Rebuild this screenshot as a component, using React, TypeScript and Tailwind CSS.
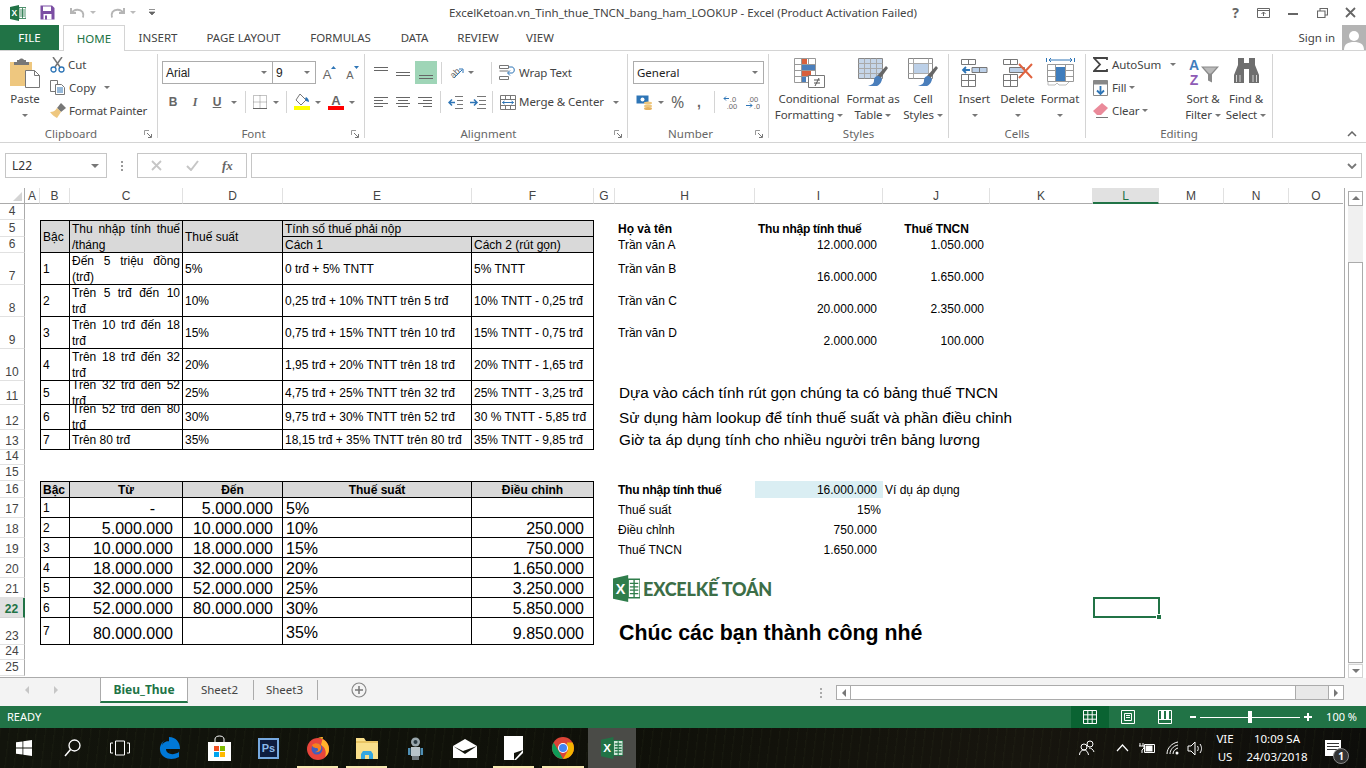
import type { ReactNode } from 'react'

const ui = "font-['Noto_Sans','Open_Sans',sans-serif]"

function Caret({ className = '' }: { className?: string }) {
  return <span className={`inline-block w-0 h-0 border-x-[3px] border-x-transparent border-t-[3px] border-t-[#777] ${className}`} />
}

function Launcher() {
  return (
    <svg width="9" height="9" viewBox="0 0 9 9" className="absolute right-[4px] top-[3px]">
      <path d="M0.5 5V.5H5" fill="none" stroke="#999" />
      <path d="M3 3l4 4M4 7.500h3.500V4" fill="none" stroke="#777" />
    </svg>
  )
}

function Sep({ className = '' }: { className?: string }) {
  return <span className={`inline-block w-px h-[22px] bg-[#d4d4d4] ${className}`} />
}

function Group({ width, label, launcher, children }: { width: string; label: string; launcher?: boolean; children: ReactNode }) {
  return (
    <div className={`${width} h-[84px] border-r border-[#d4d4d4] flex flex-col shrink-0`}>
      <div className="h-[73px] flex flex-col shrink-0">{children}</div>
      <div className={`relative h-[14px] shrink-0 text-[11.5px] leading-[14px] text-[#666] text-center ${launcher ? 'pr-[15px]' : ''}`}>
        {label}
        {launcher && <Launcher />}
      </div>
    </div>
  )
}

function Lines({ rows, stroke = '#666' }: { rows: number[][]; stroke?: string }) {
  return (
    <svg width="15" height="14" viewBox="0 0 15 14">
      {rows.map(([x1, x2, y]) => (
        <path key={`${x1}${x2}${y}`} d={`M${x1} ${y}.5H${x2}`} stroke={stroke} />
      ))}
    </svg>
  )
}

function BigButton({ width, icon, lines, caretInline }: { width: string; icon: ReactNode; lines: string[]; caretInline?: boolean }) {
  return (
    <div className={`${width} flex flex-col items-center text-[11.5px] tracking-[-0.1px] leading-[16px] text-[#444] shrink-0`}>
      <div className="h-[33px] flex items-start justify-center">{icon}</div>
      <div className="whitespace-nowrap">{lines[0]}</div>
      {caretInline ? (
        <div className="whitespace-nowrap flex items-center gap-[3px]">
          {lines[1]}
          <Caret />
        </div>
      ) : (
        <div className="h-[16px] flex items-center"><Caret /></div>
      )}
    </div>
  )
}

function ExcelMark({ size = 16, dark = '#217346', light = 'white' }: { size?: number; dark?: string; light?: string }) {
  return (
    <svg width={size} height={size} viewBox="0 0 16 16">
      <path d="M0 2l9-2v16L0 14z" fill={dark} />
      <path d="M9 2.500h7v11H9z" fill={light} stroke={dark} strokeWidth=".8" />
      <path d="M10 5h5M10 7h5M10 9h5M10 11h5M12.500 3v10" stroke={dark} strokeWidth=".8" />
      <text x="4.400" y="11" fontSize="8.500" fontWeight="700" textAnchor="middle" fill="white" fontFamily="Liberation Sans">X</text>
    </svg>
  )
}

function TitleBar() {
  return (
    <div className="h-[25px] flex items-center relative shrink-0">
      <div className="ml-[10px]"><ExcelMark size={16} /></div>
      <svg width="15" height="15" viewBox="0 0 15 15" className="ml-[14px]">
        <path d="M.5.500h11.500l2.500 2.500v11.500H.5z" fill="#7b4ea3" />
        <path d="M3 1.500h8v4.500H3z" fill="white" />
        <path d="M3.500 9h8v5.500h-8z" fill="white" />
        <path d="M5 10.500h2v4H5z" fill="#7b4ea3" />
      </svg>
      <svg width="15" height="12" viewBox="0 0 15 12" className="ml-[15px]">
        <path d="M1 1v5h5M1.500 6C4 2 10 1.500 12.500 5c1 1.500 1 3.500.5 5.500" fill="none" stroke="#b5b5b5" strokeWidth="2" />
      </svg>
      <Caret className="ml-[5px] border-t-[#bbb]" />
      <svg width="15" height="12" viewBox="0 0 15 12" className="ml-[14px]">
        <path d="M14 1v5H9M13.500 6C11 2 5 1.500 2.500 5c-1 1.500-1 3.500-.5 5.500" fill="none" stroke="#b5b5b5" strokeWidth="2" />
      </svg>
      <Caret className="ml-[5px] border-t-[#bbb]" />
      <svg width="6" height="7" viewBox="0 0 6 7" className="ml-[13px]">
        <path d="M0 .5h6M0 3h6l-3 3z" fill="#666" stroke="#666" strokeWidth=".7" />
      </svg>
      <div className="absolute left-[449px] top-[4px] text-[11.5px] tracking-[-0.03px] leading-[18px] text-[#444] whitespace-nowrap">
        ExcelKetoan.vn_Tinh_thue_TNCN_bang_ham_LOOKUP - Excel (Product Activation Failed)
      </div>
      <div className="ml-auto flex items-center mr-[10px]">
        <span className="text-[14px] font-bold text-[#666] mr-[18px] leading-none">?</span>
        <svg width="13" height="10" viewBox="0 0 13 10" className="mr-[18px]">
          <path d="M.5.500h12v9H.5zM.5 2.500h12M6.500 8V4M4.500 6l2-2 2 2" fill="none" stroke="#666" />
        </svg>
        <span className="w-[10px] h-[2px] bg-[#666] mr-[19px] mt-[3px]" />
        <svg width="11" height="10" viewBox="0 0 11 10" className="mr-[17px]">
          <path d="M.5 3h7.500v6.500H.5zM3 3V.5h7.500V7H8" fill="none" stroke="#666" strokeWidth="1.100" />
        </svg>
        <svg width="11" height="11" viewBox="0 0 11 11">
          <path d="M1 1l9 9M10 1l-9 9" stroke="#666" strokeWidth="1.800" />
        </svg>
      </div>
    </div>
  )
}

function Tabs() {
  const tabs = [
    { label: 'INSERT', cls: 'ml-[15px] w-[36px]' },
    { label: 'PAGE LAYOUT', cls: 'ml-[30px] w-[75px]' },
    { label: 'FORMULAS', cls: 'ml-[29px] w-[61px]' },
    { label: 'DATA', cls: 'ml-[29px] w-[29px]' },
    { label: 'REVIEW', cls: 'ml-[29px] w-[40px]' },
    { label: 'VIEW', cls: 'ml-[29px] w-[26px]' },
  ]
  return (
    <div className="h-[26px] flex items-end border-b border-[#d4d4d4] shrink-0 text-[11.5px]">
      <div className="w-[59px] h-[25px] bg-[#217346] text-white flex items-center justify-center">FILE</div>
      <div className="ml-[4px] w-[62px] h-[26px] bg-white border-x border-t border-[#d4d4d4] text-[#217346] flex items-center justify-center -mb-px">HOME</div>
      {tabs.map(t => (
        <div key={t.label} className={`${t.cls} h-[25px] flex items-center justify-center text-[#444] whitespace-nowrap`}>{t.label}</div>
      ))}
      <div className="ml-auto h-[25px] flex items-center text-[#444]">Sign in</div>
      <div className="ml-[7px] w-[24px] h-[25px] bg-[#b4b4b4] overflow-hidden flex items-end justify-center">
        <svg width="22" height="22" viewBox="0 0 22 22">
          <circle cx="11" cy="8" r="5" fill="white" />
          <path d="M1 22c0-6 4-8 10-8s10 2 10 8z" fill="white" />
        </svg>
      </div>
    </div>
  )
}

function Ribbon() {
  const conditional = (
    <svg width="31" height="30" viewBox="0 0 31 30">
      <path d="M.5.500h21v24H.5zM7.500.500v24M14.500.500v24M.5 6.500h21M.5 12.500h21M.5 18.500h21" fill="none" stroke="#999" />
      <path d="M8 1h5v5H8z" fill="#d9603b" />
      <path d="M8 7h13v5H8z" fill="#4a7ebb" />
      <path d="M8 13h9v5H8z" fill="#d9603b" />
      <path d="M8 19h4v5H8z" fill="#4a7ebb" />
      <path d="M14.500 17.500h16v12h-16z" fill="white" stroke="#777" />
      <path d="M20 22h6M20 25h6M25 20l-4 8" stroke="#555" />
    </svg>
  )
  const formatTable = (
    <svg width="30" height="30" viewBox="0 0 30 30">
      <path d="M.5.500h24v20H.5z" fill="#c5d5e8" stroke="#888" />
      <path d="M.5 5.500h24M.5 10.500h24M.5 15.500h24M6.500.500v20M12.500.500v20M18.500.500v20" stroke="#a9a9a9" />
      <path d="M28 8l-9 10 3 3 8-11z" fill="#666" />
      <path d="M21 18c-4 0-5 2-5 5 0 2-2 4-6 5h9c3-1 5-5 5-7z" fill="#4a7ebb" />
    </svg>
  )
  const cellStyles = (
    <svg width="30" height="30" viewBox="0 0 30 30">
      <path d="M.5.500h24v20H.5z" fill="white" stroke="#888" />
      <path d="M5 5h15v10H5z" fill="#bcd0e8" />
      <path d="M.5 5.500h24M.5 15.500h24M5.500.500v20M20.500.500v20" stroke="#a9a9a9" fill="none" />
      <path d="M28 8l-9 10 3 3 8-11z" fill="#666" />
      <path d="M21 18c-4 0-5 2-5 5 0 2-2 4-6 5h9c3-1 5-5 5-7z" fill="#4a7ebb" />
    </svg>
  )
  const insert = (
    <svg width="27" height="30" viewBox="0 0 27 30">
      <path d="M.5 1.500h14v5H.5zM7.500 1.500v5M.5 16.500h14v12H.5zM7.500 16.500v12M.5 22.500h14" fill="none" stroke="#777" />
      <path d="M11 9.500h15v5H11zM18.500 9.500v5" fill="#bcd0e8" stroke="#777" />
      <path d="M9 12H2M5 9l-3 3 3 3" fill="none" stroke="#2e75b6" strokeWidth="1.800" />
    </svg>
  )
  const del = (
    <svg width="30" height="30" viewBox="0 0 30 30">
      <path d="M.5 1.500h14v5H.5zM7.500 1.500v5M.5 16.500h14v12H.5zM7.500 16.500v12M.5 22.500h14" fill="none" stroke="#777" />
      <path d="M6.500 9.500h15v5h-15z" fill="#bcd0e8" stroke="#777" />
      <path d="M16 6l13 14M29 6L16 20" stroke="#e0633f" strokeWidth="2" />
    </svg>
  )
  const format = (
    <svg width="29" height="30" viewBox="0 0 29 30">
      <path d="M.5 0v4M28.500 0v4M3 2h23M5 0L3 2l2 2M24 0l2 2-2 2" fill="none" stroke="#2e75b6" />
      <path d="M1.500 6.500h26v17h-26zM1.500 12.500h26M1.500 18.500h26M9.500 6.500v17M19.500 6.500v17" fill="none" stroke="#999" />
      <path d="M10 9h9v14h-9z" fill="#3f7dbd" />
      <path d="M2 24v3h7l2-2 2 2h7l3-3" fill="none" stroke="#bbb" />
    </svg>
  )
  const sort = (
    <svg width="31" height="30" viewBox="0 0 31 30">
      <text x="6" y="12" fontSize="14" fontWeight="700" textAnchor="middle" fill="#3f7dbd" fontFamily="Liberation Sans">A</text>
      <text x="6" y="27" fontSize="14" fontWeight="700" textAnchor="middle" fill="#8e5bb5" fontFamily="Liberation Sans">Z</text>
      <path d="M13 8.500h18l-7 8v8l-4-2v-6z" fill="#8a8a8a" />
      <path d="M15.500 9.500h13l-5.500 6H21z" fill="#b9b9b9" />
    </svg>
  )
  const find = (
    <svg width="27" height="26" viewBox="0 0 27 26">
      <path d="M5 0h6v5h5V0h6v7l4 10v8H16V11h-5v14H1v-8l4-10z" fill="#6e6e6e" />
      <path d="M3.500 17v7M7 17v7M20 17v7M23.500 17v7" stroke="white" strokeWidth=".7" />
    </svg>
  )
  return (
    <div className="h-[92px] border-b border-[#d4d4d4] flex pt-[3px] shrink-0 relative">
      <Group width="w-[158px]" label="Clipboard" launcher>
        <div className="flex text-[11.5px] text-[#444]">
          <div className="w-[50px] flex flex-col items-center">
            <svg width="30" height="30" viewBox="0 0 30 30" className="mt-[4px]">
              <path d="M0 4h22v24H0z" fill="#eec77f" />
              <path d="M7 2h2c1-2 4-2 5 0h2v2h3v3H4V4h3z" fill="#777" />
              <path d="M15.500 12.500h9l5 5v12h-14z" fill="white" stroke="#777" />
              <path d="M24.500 12.500v5h5" fill="none" stroke="#777" />
            </svg>
            <div className="leading-[16px] mt-[3px]">Paste</div>
            <div className="h-[16px] flex items-center"><Caret /></div>
          </div>
          <div className="flex flex-col -mt-[1px]">
            <div className="h-[23px] flex items-center">
              <svg width="15" height="16" viewBox="0 0 15 16">
                <path d="M3 0l7 10M12 0L5 10" stroke="#777" strokeWidth="1.500" />
                <circle cx="3.500" cy="12.500" r="2.500" fill="none" stroke="#2e75b6" strokeWidth="1.300" />
                <circle cx="11.500" cy="12.500" r="2.500" fill="none" stroke="#2e75b6" strokeWidth="1.300" />
              </svg>
              <span className="ml-[3px]">Cut</span>
            </div>
            <div className="h-[23px] flex items-center">
              <svg width="15" height="15" viewBox="0 0 15 15">
                <path d="M.5.500h7l0 11h-7z" fill="white" stroke="#777" />
                <path d="M5.500 4.500h6l3 3v7h-9z" fill="white" stroke="#777" />
                <path d="M7 8h6M7 10h6M7 12h6" stroke="#2e75b6" />
              </svg>
              <span className="ml-[4px]">Copy</span>
              <Caret className="ml-[8px]" />
            </div>
            <div className="h-[23px] flex items-center">
              <svg width="16" height="15" viewBox="0 0 16 15">
                <path d="M11 0l5 5-5 4-4-4z" fill="#777" />
                <path d="M7 5l4 4-4 6c-2-1-5-3-7-6 3 0 5-1 7-4z" fill="#eec77f" />
              </svg>
              <span className="ml-[3px] tracking-[-0.2px] whitespace-nowrap">Format Painter</span>
            </div>
          </div>
        </div>
      </Group>

      <Group width="w-[207px]" label="Font" launcher>
        <div className="flex items-center mt-[7px] ml-[4px] h-[23px]">
          <div className="w-[111px] h-[23px] border border-[#acacac] flex items-center justify-between pl-[3px] pr-[5px] text-[12px] text-[#222] font-['Liberation_Sans',sans-serif]">Arial<Caret /></div>
          <div className="w-[43px] h-[23px] border border-l-0 border-[#acacac] flex items-center justify-between pl-[3px] pr-[5px] text-[12px] text-[#222] font-['Liberation_Sans',sans-serif]">9<Caret /></div>
          <svg width="14" height="14" viewBox="0 0 14 14" className="ml-[6px]">
            <text x="5" y="13" fontSize="13" textAnchor="middle" fill="#666" fontFamily="Liberation Sans">A</text>
            <path d="M9 3l2.500-3L14 3z" fill="#2e75b6" />
          </svg>
          <svg width="14" height="14" viewBox="0 0 14 14" className="ml-[9px]">
            <text x="5" y="13" fontSize="11" textAnchor="middle" fill="#666" fontFamily="Liberation Sans">A</text>
            <path d="M9 0l2.500 3L14 0z" fill="#2e75b6" />
          </svg>
        </div>
        <div className="flex items-center ml-[4px] mt-[7px] h-[22px] text-[#666]">
          <span className="w-[22px] text-center font-bold text-[12px] font-['Liberation_Sans',sans-serif]">B</span>
          <span className="w-[22px] text-center italic text-[12px] font-['Liberation_Serif',serif] font-bold">I</span>
          <span className="w-[22px] text-center underline font-bold text-[12px] font-['Liberation_Sans',sans-serif]">U</span>
          <Caret className="ml-[3px]" />
          <Sep className="ml-[8px]" />
          <svg width="14" height="14" viewBox="0 0 14 14" className="ml-[7px]">
            <path d="M.5.500h13v13H.5zM7 .5v13M.5 7h13" fill="none" stroke="#888" strokeDasharray="1 1" />
            <path d="M0 13.500h14" stroke="#666" />
          </svg>
          <Caret className="ml-[6px]" />
          <Sep className="ml-[7px]" />
          <svg width="16" height="16" viewBox="0 0 16 16" className="ml-[7px]">
            <path d="M6 0l6 6-5 5-5-5z" fill="white" stroke="#777" />
            <path d="M12 3c2 1 3 3 3 5l-3-1-1-2z" fill="#2e75b6" />
            <path d="M0 12h16v4H0z" fill="#ffff00" />
          </svg>
          <Caret className="ml-[5px]" />
          <svg width="16" height="16" viewBox="0 0 16 16" className="ml-[7px]">
            <text x="8" y="11" fontSize="13" fontWeight="700" textAnchor="middle" fill="#666" fontFamily="Liberation Sans">A</text>
            <path d="M0 12h16v4H0z" fill="#ff0000" />
          </svg>
          <Caret className="ml-[5px]" />
        </div>
      </Group>

      <Group width="w-[263px]" label="Alignment" launcher>
        <div className="flex items-center mt-[7px] h-[23px]">
          <div className="ml-[9px] w-[15px] h-[14px]"><Lines rows={[[0, 14, 1], [0, 14, 4]]} /></div>
          <div className="ml-[7px] w-[15px] h-[14px]"><Lines rows={[[0, 14, 6], [0, 14, 9]]} /></div>
          <div className="ml-[4px] w-[22px] h-[23px] bg-[#9fd5b7] flex items-center justify-center"><Lines rows={[[0, 14, 9], [0, 14, 12]]} /></div>
          <Sep className="ml-[4px]" />
          <svg width="15" height="15" viewBox="0 0 15 15" className="ml-[7px]">
            <text x="6" y="11" fontSize="9" textAnchor="middle" transform="rotate(-45 6 8)" fill="#666" fontFamily="Liberation Sans">ab</text>
            <path d="M5 13l8-8M10 4l4 0 0 4" fill="none" stroke="#2e75b6" />
          </svg>
          <Caret className="ml-[4px]" />
          <Sep className="ml-[17px]" />
          <svg width="16" height="15" viewBox="0 0 16 15" className="ml-[7px]">
            <path d="M.5.500h9v3h-9zM.5 11.500h9v3h-9zM.5 6h9" fill="none" stroke="#777" />
            <path d="M10 2h3c3 0 3 6 0 6H9M11 5.500L8.500 8l2.500 2.500" fill="none" stroke="#2e75b6" />
          </svg>
          <span className="ml-[4px] text-[11.5px] tracking-[-0.1px] text-[#444]">Wrap Text</span>
        </div>
        <div className="flex items-center mt-[7px] h-[22px]">
          <div className="ml-[9px] w-[15px] h-[14px]"><Lines rows={[[0, 14, 2], [0, 9, 5], [0, 14, 8], [0, 9, 11]]} /></div>
          <div className="ml-[7px] w-[15px] h-[14px]"><Lines rows={[[0, 14, 2], [2, 12, 5], [0, 14, 8], [2, 12, 11]]} /></div>
          <div className="ml-[7px] w-[15px] h-[14px]"><Lines rows={[[0, 14, 2], [5, 14, 5], [0, 14, 8], [5, 14, 11]]} /></div>
          <Sep className="ml-[7px]" />
          <svg width="15" height="13" viewBox="0 0 15 13" className="ml-[7px]">
            <path d="M7 .5h8M9 4.500h6M9 8.500h6M7 12.500h8" stroke="#777" />
            <path d="M7 6.500H1M4 3.500l-3 3 3 3" fill="none" stroke="#2e75b6" strokeWidth="1.500" />
          </svg>
          <svg width="16" height="13" viewBox="0 0 16 13" className="ml-[7px]">
            <path d="M7 .5h9M9 4.500h7M9 8.500h7M7 12.500h9" stroke="#777" />
            <path d="M0 6.500h7M4 3.500l3 3-3 3" fill="none" stroke="#2e75b6" strokeWidth="1.500" />
          </svg>
          <Sep className="ml-[6px]" />
          <svg width="16" height="15" viewBox="0 0 16 15" className="ml-[7px]">
            <path d="M.5.500h15v14H.5zM.5 4.500h15M.5 10.500h15M5.500.5v4M10.500.5v4M5.500 10.500v4M10.500 10.500v4" fill="none" stroke="#777" />
            <path d="M2.500 7.500h11M4.500 6l-2 1.500 2 1.500M11.500 6l2 1.500-2 1.500" fill="none" stroke="#2e75b6" />
          </svg>
          <span className="ml-[3px] text-[11.5px] tracking-[-0.05px] text-[#444]">Merge &amp; Center</span>
          <Caret className="ml-[9px]" />
        </div>
      </Group>

      <Group width="w-[141px]" label="Number" launcher>
        <div className="ml-[5px] mt-[7px] w-[131px] h-[23px] border border-[#acacac] flex items-center justify-between pl-[3px] pr-[5px] text-[11.5px] text-[#222]">General<Caret /></div>
        <div className="flex items-center mt-[7px] h-[22px]">
          <svg width="18" height="16" viewBox="0 0 18 16" className="ml-[8px]">
            <path d="M.5 1.500h12v8H.5z" fill="#2e75b6" />
            <circle cx="6.500" cy="5.500" r="2" fill="white" />
            <ellipse cx="12" cy="9" rx="4" ry="1.500" fill="#eec77f" />
            <ellipse cx="12" cy="12" rx="4" ry="1.500" fill="#eec77f" />
            <ellipse cx="12" cy="14.500" rx="4" ry="1.500" fill="#e6b25f" />
          </svg>
          <Caret className="ml-[4px]" />
          <span className="ml-[7px] w-[14px] text-[16px] leading-none text-[#666]">%</span>
          <span className="ml-[12px] w-[4px] text-[14px] leading-none font-bold text-[#666] font-['Liberation_Sans',sans-serif]">,</span>
          <Sep className="ml-[13px]" />
          <svg width="15" height="15" viewBox="0 0 15 15" className="ml-[8px]">
            <text x="10" y="7" fontSize="7.500" textAnchor="middle" fill="#666" fontFamily="Liberation Sans">.0</text>
            <text x="9" y="14" fontSize="7.500" textAnchor="middle" fill="#666" fontFamily="Liberation Sans">.00</text>
            <path d="M6 3.500H1M3 1.500l-2 2 2 2" fill="none" stroke="#2e75b6" />
          </svg>
          <svg width="15" height="15" viewBox="0 0 15 15" className="ml-[7px]">
            <text x="8" y="7" fontSize="7.500" textAnchor="middle" fill="#666" fontFamily="Liberation Sans">.00</text>
            <text x="12" y="14" fontSize="7.500" textAnchor="middle" fill="#666" fontFamily="Liberation Sans">.0</text>
            <path d="M1 10.500h6M5 8.500l2 2-2 2" fill="none" stroke="#2e75b6" />
          </svg>
        </div>
      </Group>

      <Group width="w-[180px]" label="Styles">
        <div className="flex pt-[4px] pl-[5px]">
          <BigButton width="w-[70px]" icon={conditional} lines={['Conditional', 'Formatting']} caretInline />
          <BigButton width="w-[58px]" icon={formatTable} lines={['Format as', 'Table']} caretInline />
          <BigButton width="w-[42px]" icon={cellStyles} lines={['Cell', 'Styles']} caretInline />
        </div>
      </Group>

      <Group width="w-[137px]" label="Cells">
        <div className="flex pt-[4px] pl-[4px]">
          <BigButton width="w-[43px]" icon={insert} lines={['Insert']} />
          <BigButton width="w-[43px]" icon={del} lines={['Delete']} />
          <BigButton width="w-[42px]" icon={format} lines={['Format']} />
        </div>
      </Group>

      <Group width="w-[187px]" label="Editing">
        <div className="flex text-[11.5px] tracking-[-0.1px] text-[#444]">
          <div className="flex flex-col pl-[7px] w-[96px] -mt-[1px]">
            <div className="h-[23px] flex items-center">
              <svg width="15" height="15" viewBox="0 0 15 15">
                <path d="M14 3V1H1l6 6.500L1 14h13v-2" fill="none" stroke="#444" strokeWidth="1.800" />
              </svg>
              <span className="ml-[4px]">AutoSum</span>
              <Caret className="ml-[9px]" />
            </div>
            <div className="h-[23px] flex items-center">
              <svg width="15" height="16" viewBox="0 0 15 16">
                <path d="M.5.500h14v15H.5z" fill="white" stroke="#888" />
                <path d="M.5.500h14v4H.5z" fill="#888" />
                <path d="M7.500 6v8M4 10.500l3.500 3.500 3.500-3.500" fill="none" stroke="#2e75b6" strokeWidth="1.800" />
              </svg>
              <span className="ml-[4px]">Fill</span>
              <Caret className="ml-[3px]" />
            </div>
            <div className="h-[23px] flex items-center">
              <svg width="15" height="15" viewBox="0 0 15 15">
                <path d="M9 0l6 5-7 7H4L0 8z" fill="#ea8a9a" />
                <path d="M3 14.500h12" stroke="#777" />
              </svg>
              <span className="ml-[4px]">Clear</span>
              <Caret className="ml-[3px]" />
            </div>
          </div>
          <div className="pt-[4px] flex">
            <BigButton width="w-[42px]" icon={sort} lines={['Sort &', 'Filter']} caretInline />
            <BigButton width="w-[44px]" icon={find} lines={['Find &', 'Select']} caretInline />
          </div>
        </div>
      </Group>

      <svg width="10" height="6" viewBox="0 0 10 6" className="absolute right-[9px] top-[80px]">
        <path d="M1 5l4-4 4 4" fill="none" stroke="#666" strokeWidth="1.500" />
      </svg>
    </div>
  )
}

function FormulaBar() {
  return (
    <div className="h-[25px] mt-[10px] flex shrink-0 text-[12px]">
      <div className="ml-[5px] w-[102px] border border-[#c6c6c6] flex items-center justify-between pl-[6px] pr-[7px] text-[#333]">
        L22
        <Caret className="border-x-[4px] border-t-[4px]" />
      </div>
      <div className="w-[30px] flex flex-col items-center justify-center gap-[2px]">
        <span className="w-[2px] h-[2px] bg-[#999]" />
        <span className="w-[2px] h-[2px] bg-[#999]" />
        <span className="w-[2px] h-[2px] bg-[#999]" />
      </div>
      <div className="w-[110px] border border-[#c6c6c6] flex items-center pl-[13px]">
        <svg width="11" height="11" viewBox="0 0 11 11">
          <path d="M1 1l9 9M10 1l-9 9" stroke="#c6c6c6" strokeWidth="1.800" />
        </svg>
        <svg width="13" height="11" viewBox="0 0 13 11" className="ml-[24px]">
          <path d="M1 6l4 4 7-9" fill="none" stroke="#c6c6c6" strokeWidth="2" />
        </svg>
        <span className="ml-[23px] italic font-bold text-[13px] text-[#666] font-['Liberation_Serif',serif]">fx</span>
      </div>
      <div className="ml-[4px] w-[1111px] border border-[#c6c6c6] flex items-center justify-end pr-[4px]">
        <svg width="10" height="6" viewBox="0 0 10 6">
          <path d="M1 1l4 4 4-4" fill="none" stroke="#777" strokeWidth="1.800" />
        </svg>
      </div>
    </div>
  )
}

const top = [
  { row: 'row-start-5', n: '1', c: 'Đến 5 triệu đồng (trđ)', d: '5%', e: '0 trđ + 5% TNTT', f: '5% TNTT' },
  { row: 'row-start-6', n: '2', c: 'Trên 5 trđ đến 10 trđ', d: '10%', e: '0,25 trđ + 10% TNTT trên 5 trđ', f: '10% TNTT - 0,25 trđ' },
  { row: 'row-start-7', n: '3', c: 'Trên 10 trđ đến 18 trđ', d: '15%', e: '0,75 trđ + 15% TNTT trên 10 trđ', f: '15% TNTT - 0,75 trđ' },
  { row: 'row-start-8', n: '4', c: 'Trên 18 trđ đến 32 trđ', d: '20%', e: '1,95 trđ + 20% TNTT trên 18 trđ', f: '20% TNTT - 1,65 trđ' },
  { row: 'row-start-9', n: '5', c: 'Trên 32 trđ đến 52 trđ', d: '25%', e: '4,75 trđ + 25% TNTT trên 32 trđ', f: '25% TNTT - 3,25 trđ' },
  { row: 'row-start-10', n: '6', c: 'Trên 52 trđ đến 80 trđ', d: '30%', e: '9,75 trđ + 30% TNTT trên 52 trđ', f: '30 % TNTT - 5,85 trđ' },
  { row: 'row-start-11', n: '7', c: 'Trên 80 trđ', d: '35%', e: '18,15 trđ + 35% TNTT trên 80 trđ', f: '35% TNTT - 9,85 trđ' },
]

const bottom = [
  { row: 'row-start-15', n: '1', c: '-', d: '5.000.000', e: '5%', f: '', numPad: 'pt-[2px]', pctPad: 'pt-[2px]', cPad: 'pr-[27px]' },
  { row: 'row-start-16', n: '2', c: '5.000.000', d: '10.000.000', e: '10%', f: '250.000', numPad: 'pt-[2px]', pctPad: 'pt-[2px]', cPad: 'pr-[9px]' },
  { row: 'row-start-17', n: '3', c: '10.000.000', d: '18.000.000', e: '15%', f: '750.000', numPad: 'pt-[2px]', pctPad: 'pt-[2px]', cPad: 'pr-[9px]' },
  { row: 'row-start-18', n: '4', c: '18.000.000', d: '32.000.000', e: '20%', f: '1.650.000', numPad: 'pt-[2px]', pctPad: 'pt-[2px]', cPad: 'pr-[9px]' },
  { row: 'row-start-19', n: '5', c: '32.000.000', d: '52.000.000', e: '25%', f: '3.250.000', numPad: 'pt-[2px]', pctPad: 'pt-[2px]', cPad: 'pr-[9px]' },
  { row: 'row-start-20', n: '6', c: '52.000.000', d: '80.000.000', e: '30%', f: '5.850.000', numPad: 'pt-[2px]', pctPad: 'pt-[2px]', cPad: 'pr-[9px]' },
  { row: 'row-start-21', n: '7', c: '80.000.000', d: '', e: '35%', f: '9.850.000', numPad: 'pt-[6px]', pctPad: 'pt-[3px]', cPad: 'pr-[9px]' },
]

const colHeaders = [
  { label: 'A', cls: 'col-start-2' },
  { label: 'B', cls: 'col-start-3' },
  { label: 'C', cls: 'col-start-4' },
  { label: 'D', cls: 'col-start-5' },
  { label: 'E', cls: 'col-start-6' },
  { label: 'F', cls: 'col-start-7' },
  { label: 'G', cls: 'col-start-8' },
  { label: 'H', cls: 'col-start-9' },
  { label: 'I', cls: 'col-start-10' },
  { label: 'J', cls: 'col-start-11' },
  { label: 'K', cls: 'col-start-12' },
  { label: 'L', cls: 'col-start-13' },
  { label: 'M', cls: 'col-start-14' },
  { label: 'N', cls: 'col-start-15' },
  { label: 'O', cls: 'col-start-16' },
]

const rowHeaders = [
  { label: '4', cls: 'row-start-2' },
  { label: '5', cls: 'row-start-3' },
  { label: '6', cls: 'row-start-4' },
  { label: '7', cls: 'row-start-5' },
  { label: '8', cls: 'row-start-6' },
  { label: '9', cls: 'row-start-7' },
  { label: '10', cls: 'row-start-8' },
  { label: '11', cls: 'row-start-9' },
  { label: '12', cls: 'row-start-10' },
  { label: '13', cls: 'row-start-11' },
  { label: '14', cls: 'row-start-12' },
  { label: '15', cls: 'row-start-13' },
  { label: '16', cls: 'row-start-14' },
  { label: '17', cls: 'row-start-15' },
  { label: '18', cls: 'row-start-16' },
  { label: '19', cls: 'row-start-17' },
  { label: '20', cls: 'row-start-18' },
  { label: '21', cls: 'row-start-19' },
  { label: '22', cls: 'row-start-20' },
  { label: '23', cls: 'row-start-21' },
  { label: '24', cls: 'row-start-22' },
  { label: '25', cls: 'row-start-23' },
]

const boxed = 'border-r border-b border-black flex items-center overflow-hidden px-[2px]'
const gray = 'bg-[#d9d9d9]'
const para = 'col-start-9 col-span-4 pl-[4px] text-[15.3px] flex items-center whitespace-nowrap'

function Sheet() {
  return (
    <div className="relative h-[490px] mt-[10px] shrink-0 font-['Liberation_Sans',sans-serif] text-[12px] leading-[16px] text-black">
      <div className="w-[1345px] h-[490px] border-r border-b border-[#ababab] grid grid-cols-[25px_15px_30px_113px_100px_189px_122px_21px_140px_128px_107px_103px_66px_65px_65px_54px] grid-rows-[16px_16px_17px_16px_32px_32px_32px_32px_24px_25px_20px_15px_16px_17px_20px_20px_20px_20px_20px_20px_27px_15px_16px]">
        <div className="col-start-1 row-start-1 border-b border-[#ababab] border-r flex items-end justify-end pr-[2px] pb-[2px]">
          <span className="w-0 h-0 border-l-[9px] border-l-transparent border-b-[9px] border-b-[#d4d4d4]" />
        </div>
        {colHeaders.map(h => (
          <div key={h.label} className={`${h.cls} row-start-1 border-b border-[#ababab] flex items-center justify-center pt-[1px] ${h.label === 'L' ? 'bg-[#e1e1e1] text-[#217346] border-b-2 border-b-[#217346]' : 'text-[#444]'} ${h.label === 'O' ? '' : 'border-r border-r-[#e1e1e1]'}`}>{h.label}</div>
        ))}
        {rowHeaders.map(h => (
          <div key={h.label} className={`${h.cls} col-start-1 border-r flex items-end justify-center overflow-hidden ${h.label === '22' ? 'bg-[#e1e1e1] font-bold text-[#217346] border-r-2 border-r-[#217346] border-b border-b-[#d4d4d4]' : 'text-[#444] border-r-[#ababab] border-b border-b-[#e1e1e1]'}`}>{h.label}</div>
        ))}

        <div className={`col-start-3 row-start-3 row-span-2 border-l border-t ${boxed} ${gray}`}>Bậc</div>
        <div className={`col-start-4 row-start-3 row-span-2 border-t ${boxed} ${gray}`}><div className="w-full text-justify">Thu nhập tính thuế /tháng</div></div>
        <div className={`col-start-5 row-start-3 row-span-2 border-t ${boxed} ${gray}`}>Thuế suất</div>
        <div className={`col-start-6 col-span-2 row-start-3 border-t ${boxed} ${gray}`}>Tính số thuế phải nộp</div>
        <div className={`col-start-6 row-start-4 ${boxed} ${gray}`}>Cách 1</div>
        <div className={`col-start-7 row-start-4 ${boxed} ${gray}`}>Cách 2 (rút gọn)</div>
        {top.map(r => (
          <div key={r.n} className="contents">
            <div className={`col-start-3 ${r.row} border-l ${boxed}`}>{r.n}</div>
            <div className={`col-start-4 ${r.row} ${boxed}`}><div className="w-full text-justify shrink-0">{r.c}</div></div>
            <div className={`col-start-5 ${r.row} ${boxed}`}>{r.d}</div>
            <div className={`col-start-6 ${r.row} ${boxed} whitespace-nowrap`}>{r.e}</div>
            <div className={`col-start-7 ${r.row} ${boxed} whitespace-nowrap`}>{r.f}</div>
          </div>
        ))}

        <div className={`col-start-3 row-start-14 border-l border-t font-bold ${boxed} ${gray}`}>Bậc</div>
        <div className={`col-start-4 row-start-14 border-t font-bold justify-center ${boxed} ${gray}`}>Từ</div>
        <div className={`col-start-5 row-start-14 border-t font-bold justify-center ${boxed} ${gray}`}>Đến</div>
        <div className={`col-start-6 row-start-14 border-t font-bold justify-center ${boxed} ${gray}`}>Thuế suất</div>
        <div className={`col-start-7 row-start-14 border-t font-bold justify-center ${boxed} ${gray}`}>Điều chỉnh</div>
        {bottom.map(r => (
          <div key={r.n} className="contents">
            <div className={`col-start-3 ${r.row} border-l ${boxed}`}>{r.n}</div>
            <div className={`col-start-4 ${r.row} ${boxed} justify-end text-[16px] ${r.cPad} ${r.numPad}`}>{r.c}</div>
            <div className={`col-start-5 ${r.row} ${boxed} justify-end pr-[9px] text-[16px] ${r.numPad}`}>{r.d}</div>
            <div className={`col-start-6 ${r.row} ${boxed} pl-[3px] text-[16px] ${r.pctPad}`}>{r.e}</div>
            <div className={`col-start-7 ${r.row} ${boxed} justify-end pr-[9px] text-[16px] ${r.numPad}`}>{r.f}</div>
          </div>
        ))}

        <div className="col-start-9 row-start-3 font-bold pl-[3px] flex items-center">Họ và tên</div>
        <div className="col-start-10 row-start-3 font-bold tracking-[-0.25px] pl-[3px] flex items-center whitespace-nowrap">Thu nhập tính thuế</div>
        <div className="col-start-11 row-start-3 font-bold tracking-[-0.1px] flex items-center justify-center">Thuế TNCN</div>
        <div className="col-start-9 row-start-4 pl-[3px] flex items-center">Trần văn A</div>
        <div className="col-start-10 row-start-4 pr-[6px] flex items-center justify-end">12.000.000</div>
        <div className="col-start-11 row-start-4 pr-[6px] flex items-center justify-end">1.050.000</div>
        <div className="col-start-9 row-start-5 pl-[3px] flex items-center">Trần văn B</div>
        <div className="col-start-10 row-start-5 pr-[6px] flex items-end justify-end">16.000.000</div>
        <div className="col-start-11 row-start-5 pr-[6px] flex items-end justify-end">1.650.000</div>
        <div className="col-start-9 row-start-6 pl-[3px] flex items-center">Trần văn C</div>
        <div className="col-start-10 row-start-6 pr-[6px] flex items-end justify-end">20.000.000</div>
        <div className="col-start-11 row-start-6 pr-[6px] flex items-end justify-end">2.350.000</div>
        <div className="col-start-9 row-start-7 pl-[3px] flex items-center">Trần văn D</div>
        <div className="col-start-10 row-start-7 pr-[6px] flex items-end justify-end">2.000.000</div>
        <div className="col-start-11 row-start-7 pr-[6px] flex items-end justify-end">100.000</div>

        <div className={`${para} row-start-9`}>Dựa vào cách tính rút gọn chúng ta có bảng thuế TNCN</div>
        <div className={`${para} row-start-10`}>Sử dụng hàm lookup để tính thuế suất và phần điều chỉnh</div>
        <div className={`${para} row-start-11`}>Giờ ta áp dụng tính cho nhiều người trên bảng lương</div>

        <div className="col-start-9 row-start-14 font-bold tracking-[-0.25px] pl-[3px] flex items-center">Thu nhập tính thuế</div>
        <div className="col-start-10 row-start-14 bg-[#daeef3] pr-[6px] flex items-center justify-end">16.000.000</div>
        <div className="col-start-11 row-start-14 pl-[2px] flex items-center">Ví dụ áp dụng</div>
        <div className="col-start-9 row-start-15 pl-[3px] flex items-end">Thuế suất</div>
        <div className="col-start-10 row-start-15 pr-[2px] flex items-end justify-end">15%</div>
        <div className="col-start-9 row-start-16 pl-[3px] flex items-end">Điều chỉnh</div>
        <div className="col-start-10 row-start-16 pr-[6px] flex items-end justify-end">750.000</div>
        <div className="col-start-9 row-start-17 pl-[3px] flex items-end">Thuế TNCN</div>
        <div className="col-start-10 row-start-17 pr-[6px] flex items-end justify-end">1.650.000</div>

        <div className="col-start-9 col-span-2 row-start-19 row-span-2 -ml-[2px] flex items-start whitespace-nowrap">
          <div className="flex items-center gap-[3px] mt-[-3px]">
            <ExcelMark size={27} dark="#2f7d4b" />
            <span className="font-['Lato',sans-serif] font-black text-[18px] tracking-[-0.2px] leading-[26px] text-[#3c6e47]">EXCELKẾ TOÁN</span>
          </div>
        </div>
        <div className="col-start-9 col-span-4 row-start-21 pl-[4px] font-bold text-[21.33px] leading-[24px] flex items-end whitespace-nowrap">Chúc các bạn thành công nhé</div>

        <div className="col-start-13 row-start-20 relative border-2 border-[#217346] -mr-px -mt-px">
          <span className="absolute -right-[4px] -bottom-[4px] w-[6px] h-[6px] bg-[#217346] border border-white" />
        </div>
      </div>

      <div className="absolute left-[1348px] top-[3px] w-[15px] h-[487px] bg-[#f0f0f0] flex flex-col">
        <div className="h-[15px] border border-[#ababab] bg-white flex items-center justify-center">
          <span className="w-0 h-0 border-x-[4px] border-x-transparent border-b-[4px] border-b-[#777]" />
        </div>
        <div className="mt-[56px] h-[402px] border border-[#ababab] bg-white" />
        <div className="mt-[1px] h-[14px] border border-[#d4d4d4] bg-white flex items-center justify-center">
          <span className="w-0 h-0 border-x-[4px] border-x-transparent border-t-[4px] border-t-[#777]" />
        </div>
      </div>
    </div>
  )
}

function SheetTabs() {
  return (
    <div className="h-[28px] bg-[#f3f3f3] flex shrink-0 text-[11.5px] text-[#444] relative">
      <div className="flex items-center h-[24px]">
        <span className="ml-[25px] w-0 h-0 border-y-[4px] border-y-transparent border-r-[4px] border-r-[#c6c6c6]" />
        <span className="ml-[25px] w-0 h-0 border-y-[4px] border-y-transparent border-l-[4px] border-l-[#c6c6c6]" />
      </div>
      <div className="ml-[42px] w-[88px] h-[25px] bg-white border-x border-[#ababab] border-b-2 border-b-[#217346] flex items-center justify-center font-bold text-[12px] text-[#217346]">Bieu_Thue</div>
      <div className="w-[65px] h-[24px] pr-[2px] flex items-center justify-center">Sheet2</div>
      <span className="w-px h-[20px] mt-[2px] bg-[#ababab]" />
      <div className="w-[63px] h-[24px] pr-[2px] flex items-center justify-center">Sheet3</div>
      <span className="w-px h-[20px] mt-[2px] bg-[#ababab]" />
      <div className="ml-[33px] h-[24px] flex items-center">
        <svg width="16" height="16" viewBox="0 0 16 16">
          <circle cx="8" cy="8" r="7" fill="none" stroke="#888" strokeWidth="1.200" />
          <path d="M8 4v8M4 8h8" stroke="#777" strokeWidth="1.500" />
        </svg>
      </div>
      <div className="ml-auto flex items-start h-[28px] pt-[7px] mr-[22px]">
        <div className="flex flex-col gap-[2px] mr-[14px] mt-[3px]">
          <span className="w-[2px] h-[2px] bg-[#aaa]" />
          <span className="w-[2px] h-[2px] bg-[#aaa]" />
          <span className="w-[2px] h-[2px] bg-[#aaa]" />
        </div>
        <div className="w-[508px] h-[15px] border border-[#ababab] flex bg-[#e8e8e8]">
          <div className="w-[14px] bg-white border-r border-[#ababab] flex items-center justify-center">
            <span className="w-0 h-0 border-y-[4px] border-y-transparent border-r-[4px] border-r-[#777]" />
          </div>
          <div className="w-[445px] bg-white border-r border-[#ababab]" />
          <div className="ml-auto w-[15px] bg-white border-l border-[#ababab] flex items-center justify-center">
            <span className="w-0 h-0 border-y-[4px] border-y-transparent border-l-[4px] border-l-[#777]" />
          </div>
        </div>
      </div>
    </div>
  )
}

function StatusBar() {
  return (
    <div className="h-[22px] bg-[#217346] text-white flex items-center shrink-0 text-[11px]">
      <span className="ml-[7px]">READY</span>
      <div className="ml-auto h-[22px] w-[38px] bg-[#0a6332] flex items-center justify-center">
        <svg width="14" height="14" viewBox="0 0 14 14">
          <path d="M.5.500h13v13H.5zM4.800.5v13M9.200.5v13M.5 4.800h13M.5 9.200h13" fill="none" stroke="white" />
        </svg>
      </div>
      <svg width="14" height="14" viewBox="0 0 14 14" className="ml-[12px]">
        <path d="M.5.500h13v13H.5zM3.500 3.500h7v7h-7zM5 5.500h4M5 7.500h4" fill="none" stroke="white" />
      </svg>
      <svg width="14" height="14" viewBox="0 0 14 14" className="ml-[23px]">
        <path d="M.5.500h13v13H.5zM.5 9.500h13" fill="none" stroke="white" />
        <path d="M3 1h3v8H3zM8 1h3v8H8z" fill="white" />
      </svg>
      <span className="ml-[18px] w-[6px] h-[2px] bg-white" />
      <div className="ml-[4px] w-[100px] h-px bg-white flex items-center justify-center">
        <span className="w-[4px] h-[12px] bg-white" />
      </div>
      <svg width="8" height="8" viewBox="0 0 8 8" className="ml-[4px]">
        <path d="M4 0v8M0 4h8" stroke="white" strokeWidth="2" />
      </svg>
      <span className="ml-[14px] mr-[9px] whitespace-nowrap">100 %</span>
    </div>
  )
}

function TaskItem({ children, width = 'w-[49px]', active, running }: { children: ReactNode; width?: string; active?: boolean; running?: boolean }) {
  return (
    <div className={`${width} h-[40px] relative flex items-center justify-center ${active ? 'bg-[#4a4b47]' : ''}`}>
      {children}
      {running && <span className="absolute left-[4px] right-[4px] bottom-0 h-[2px] bg-[#f5e8b0]" />}
    </div>
  )
}

function Taskbar() {
  return (
    <div className="h-[40px] bg-[repeating-linear-gradient(97deg,rgba(70,80,45,0.12)_0px,transparent_2px,transparent_9px),linear-gradient(90deg,#12140c,#0f1009_45%,#17150e_75%,#0d0d0a)] flex items-center shrink-0 text-white">
      <TaskItem width="w-[48px]">
        <svg width="16" height="16" viewBox="0 0 16 16">
          <path d="M0 2.300l6.500-.9v6.200H0zM7.300 1.300L16 0v7.600H7.300zM0 8.400h6.500v6.200L0 13.700zM7.300 8.400H16V16l-8.700-1.300z" fill="white" />
        </svg>
      </TaskItem>
      <TaskItem width="w-[48px]">
        <svg width="17" height="18" viewBox="0 0 17 18">
          <circle cx="10.500" cy="6.500" r="5.500" fill="none" stroke="white" strokeWidth="1.300" />
          <path d="M6.500 10.500L1 17" stroke="white" strokeWidth="1.500" />
        </svg>
      </TaskItem>
      <TaskItem width="w-[48px]">
        <svg width="20" height="16" viewBox="0 0 20 16">
          <path d="M5.500 1h9v14h-9z" fill="none" stroke="white" />
          <path d="M3 3H.5v10H3M17 3h2.500v10H17" fill="none" stroke="white" />
        </svg>
      </TaskItem>
      <TaskItem width="w-[51px]">
        <svg width="21" height="22" viewBox="0 0 21 22">
          <path d="M10 0c7 0 11 5 11 12H7c0 5 7 7 13 3v5c-7 4-18 2-19-7C.5 9 3 5 6 3 4 5 3.500 6 3 8c2-3 4-4 7-4 2 0 4 1 5 4H8c1-2 2-3 2-3z" fill="#0078d7" />
        </svg>
      </TaskItem>
      <TaskItem>
        <svg width="23" height="26" viewBox="0 0 23 26">
          <path d="M7 7V4c0-4 9-4 9 0v3" fill="none" stroke="white" />
          <path d="M0 7h23v19H0z" fill="white" />
          <path d="M6 11h5v5H6z" fill="#f25022" />
          <path d="M12 11h5v5h-5z" fill="#7fba00" />
          <path d="M6 17h5v5H6z" fill="#00a4ef" />
          <path d="M12 17h5v5h-5z" fill="#ffb900" />
        </svg>
      </TaskItem>
      <TaskItem>
        <div className="w-[21px] h-[21px] bg-[#0d1c3f] border-2 border-[#76a9e0] flex items-center justify-center text-[11px] font-bold text-[#8ab8ea] font-['Liberation_Sans',sans-serif] leading-none">Ps</div>
      </TaskItem>
      <TaskItem running>
        <svg width="22" height="24" viewBox="0 0 22 24">
          <circle cx="11" cy="13" r="11" fill="#e8453c" />
          <path d="M11 2c6 0 11 5 11 11 0 3-1 6-4 8 2-5 0-10-4-12L16 1c-2 0-3 0-5 1z" fill="#ffb32c" />
          <circle cx="10" cy="13" r="5.500" fill="#3f5fbf" />
          <path d="M5 9c3-3 8-2 9 1 1 4-2 7-6 6 3 0 4-3 2-4-2 0-4 0-5-3z" fill="#f77f1f" />
        </svg>
      </TaskItem>
      <TaskItem running>
        <svg width="22" height="21" viewBox="0 0 22 21">
          <path d="M0 0h8l2 3h12v18H0z" fill="#f9df8b" />
          <path d="M0 3h22v2H0z" fill="#e9c564" />
          <path d="M7 13h8l2 3v5H5v-5z" fill="#35a7e0" />
          <path d="M9 17h4v4H9z" fill="#f9df8b" />
        </svg>
      </TaskItem>
      <TaskItem>
        <svg width="15" height="23" viewBox="0 0 15 23">
          <circle cx="7.500" cy="5" r="4.500" fill="#9aa7ad" />
          <circle cx="7.500" cy="5" r="2" fill="#2b3a42" />
          <path d="M3 10h9v9H3z" fill="#b9c4c9" />
          <path d="M0 11h2.500v7H0zM12.500 11H15v7h-2.500z" fill="#4f8fb5" />
          <path d="M4 19h7v4H4z" fill="#70787c" />
        </svg>
      </TaskItem>
      <TaskItem>
        <svg width="24" height="19" viewBox="0 0 24 19">
          <path d="M0 7L12 0l12 7v12H0z" fill="white" />
          <path d="M0 7l10 5 14-5-12 8z" fill="#12140c" />
        </svg>
      </TaskItem>
      <TaskItem running>
        <svg width="19" height="24" viewBox="0 0 19 24">
          <path d="M0 0h19v17l-7 7H0z" fill="white" />
          <path d="M19 14l-9 10v-7z" fill="#12140c" />
        </svg>
      </TaskItem>
      <TaskItem running width="w-[50px]">
        <svg width="22" height="22" viewBox="0 0 22 22">
          <circle cx="11" cy="11" r="11" fill="#db4437" />
          <path d="M20.500 5.500A11 11 0 0 1 11 22l5-8.500-1-8z" fill="#f4b400" />
          <path d="M11 22A11 11 0 0 1 1.500 5.500L7 14.500z" fill="#0f9d58" />
          <circle cx="11" cy="11" r="5" fill="white" />
          <circle cx="11" cy="11" r="4" fill="#4285f4" />
        </svg>
      </TaskItem>
      <TaskItem width="w-[48px]" active>
        <ExcelMark size={22} dark="#217346" light="#cfe6d8" />
      </TaskItem>

      <div className="ml-auto flex items-center text-[11.5px]">
        <svg width="16" height="16" viewBox="0 0 16 16">
          <circle cx="11" cy="4" r="3" fill="none" stroke="white" />
          <circle cx="5" cy="7" r="3" fill="none" stroke="white" />
          <path d="M.5 15c0-3 2-5 4.500-5s4 2 4.500 5M10 8c2 0 4 1 5 4" fill="none" stroke="white" />
        </svg>
        <svg width="13" height="8" viewBox="0 0 13 8" className="ml-[21px]">
          <path d="M1 7l5.500-6L12 7" fill="none" stroke="white" strokeWidth="1.200" />
        </svg>
        <svg width="16" height="12" viewBox="0 0 16 12" className="ml-[10px]">
          <path d="M5.500 2.500h10v8h-10z" fill="none" stroke="white" />
          <path d="M6.500 3.500h7v6h-7z" fill="white" />
          <path d="M1 1v3M4 1v3M0 4h5v2L3 8v3" fill="none" stroke="white" />
        </svg>
        <svg width="13" height="14" viewBox="0 0 13 14" className="ml-[11px]">
          <path d="M1 13c0-6 5-11 11-12M4 13c0-4 3-8 8-9M7 13c0-3 2-5 5-6" fill="none" stroke="white" />
          <circle cx="11" cy="12" r="1.500" fill="white" />
        </svg>
        <svg width="17" height="15" viewBox="0 0 17 15" className="ml-[8px]">
          <path d="M1 5h3l4-4v13l-4-4H1z" fill="none" stroke="white" />
          <path d="M10.500 5c1 1.500 1 3.500 0 5M13 3c2 3 2 6 0 9" fill="none" stroke="white" />
        </svg>
        <div className="ml-[5px] w-[32px] flex flex-col items-center leading-[18px]">
          <span>VIE</span>
          <span>US</span>
        </div>
        <div className="w-[72px] flex flex-col items-center leading-[18px]">
          <span>10:09 SA</span>
          <span>24/03/2018</span>
        </div>
        <div className="relative ml-[12px] mr-[25px] w-[16px] h-[16px] bg-white">
          <span className="block pt-[3px] mx-[2px] h-[4px] border-b border-[#333]" />
          <span className="block mt-[2px] mx-[2px] h-px bg-[#333]" />
          <span className="block mt-[2px] mx-[2px] h-px bg-[#333]" />
          <span className="absolute -right-[8px] -bottom-[8px] w-[16px] h-[16px] rounded-full bg-[#333] border border-[#888] flex items-center justify-center text-[10px] font-bold">1</span>
        </div>
      </div>
    </div>
  )
}

export default function App() {
  return (
    <div className={`w-[1366px] h-[768px] overflow-hidden bg-white flex flex-col ${ui}`}>
      <TitleBar />
      <Tabs />
      <Ribbon />
      <FormulaBar />
      <Sheet />
      <SheetTabs />
      <StatusBar />
      <Taskbar />
    </div>
  )
}
